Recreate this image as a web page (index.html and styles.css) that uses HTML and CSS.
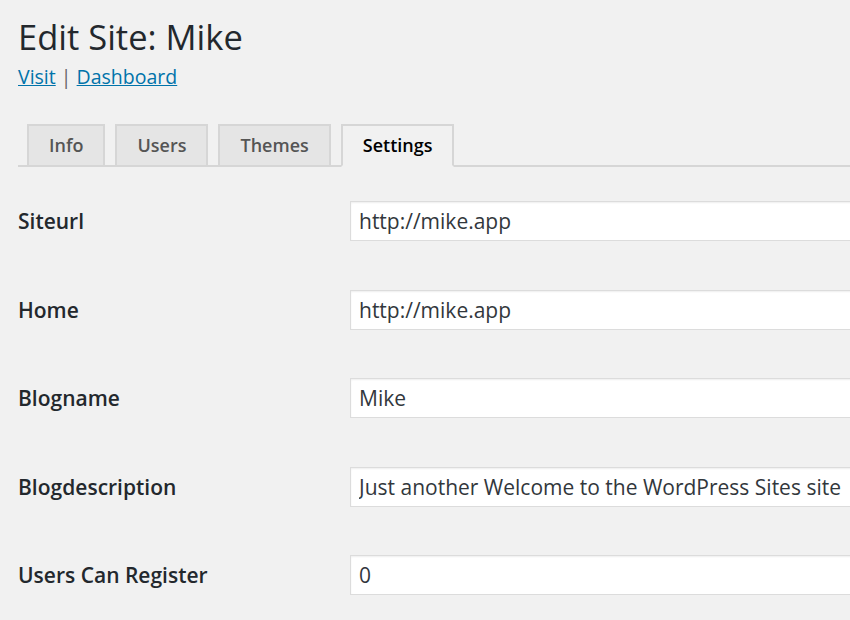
FILE: index.html
```html
<!DOCTYPE html>
<html lang="en">
<head>
<meta charset="utf-8">
<title>Edit Site: Mike</title>
<link rel="stylesheet" href="styles.css">
</head>
<body>
<div class="wrap">
  <h1 class="title">Edit Site: Mike</h1>
  <p class="links"><a href="#">Visit</a> <span class="sep">|</span> <a href="#">Dashboard</a></p>
  <nav class="tabs">
    <a class="tab" href="#">Info</a>
    <a class="tab" href="#">Users</a>
    <a class="tab" href="#">Themes</a>
    <a class="tab active" href="#">Settings</a>
  </nav>
  <div class="form">
    <div class="row"><label class="label">Siteurl</label><div class="field"><input class="input" type="text" value="http://mike.app"></div></div>
    <div class="row"><label class="label">Home</label><div class="field"><input class="input" type="text" value="http://mike.app"></div></div>
    <div class="row"><label class="label">Blogname</label><div class="field"><input class="input" type="text" value="Mike"></div></div>
    <div class="row"><label class="label">Blogdescription</label><div class="field"><input class="input" type="text" value="Just another Welcome to the WordPress Sites site"></div></div>
    <div class="row"><label class="label">Users Can Register</label><div class="field"><input class="input" type="text" value="0"></div></div>
  </div>
</div>
</body>
</html>
```

FILE: styles.css
```css
html { overflow: hidden; }
body {
  margin: 0;
  background: #f1f1f1;
  font-family: "Open Sans", "Noto Sans", sans-serif;
  color: #23282d;
}
.wrap {
  padding: 0 0 0 18px;
  width: 900px;
}
.title {
  margin: 0;
  padding-top: 13px;
  font-size: 34.5px;
  font-weight: 400;
  line-height: 48px;
  color: #23282d;
}
.links {
  margin: 0;
  font-size: 19.5px;
  line-height: 32px;
  color: #666;
}
.links a { color: #0073aa; text-decoration: underline; }
.sep { color: #666; }
.tabs {
  display: flex;
  margin-top: 31px;
  padding-left: 9px;
  border-bottom: 2px solid #d6d6d6;
  gap: 10px;
  align-items: flex-end;
}
.tab {
  display: block;
  height: 39px;
  margin-bottom: -2px;
  padding: 0 20px;
  border: 2px solid #d6d6d6;
  background: #e5e5e5;
  font-family: "Open Sans SemiBold", "Open Sans", sans-serif;
  font-size: 18px;
  font-weight: 600;
  line-height: 39px;
  color: #555;
  text-decoration: none;
}
.tab.active {
  background: #f1f1f1;
  color: #000;
  border-bottom-color: #f1f1f1;
}
.form { padding-top: 9.75px; }
.row {
  display: grid;
  grid-template-columns: 332px 1fr;
  align-items: center;
  padding: 24.25px 0;
}
.label {
  font-family: "Open Sans SemiBold", "Open Sans", sans-serif;
  font-size: 21px;
  font-weight: 600;
  color: #23282d;
}
.input {
  display: block;
  box-sizing: border-box;
  width: 640px;
  height: 40px;
  margin: 0;
  padding: 0 8px;
  border: 1px solid #dcdcdc;
  background: #fff;
  box-shadow: inset 0 1px 2px rgba(0,0,0,.07);
  font-family: "Open Sans", "Noto Sans", sans-serif;
  font-size: 21px;
  color: #32373c;
  outline: none;
}
```
